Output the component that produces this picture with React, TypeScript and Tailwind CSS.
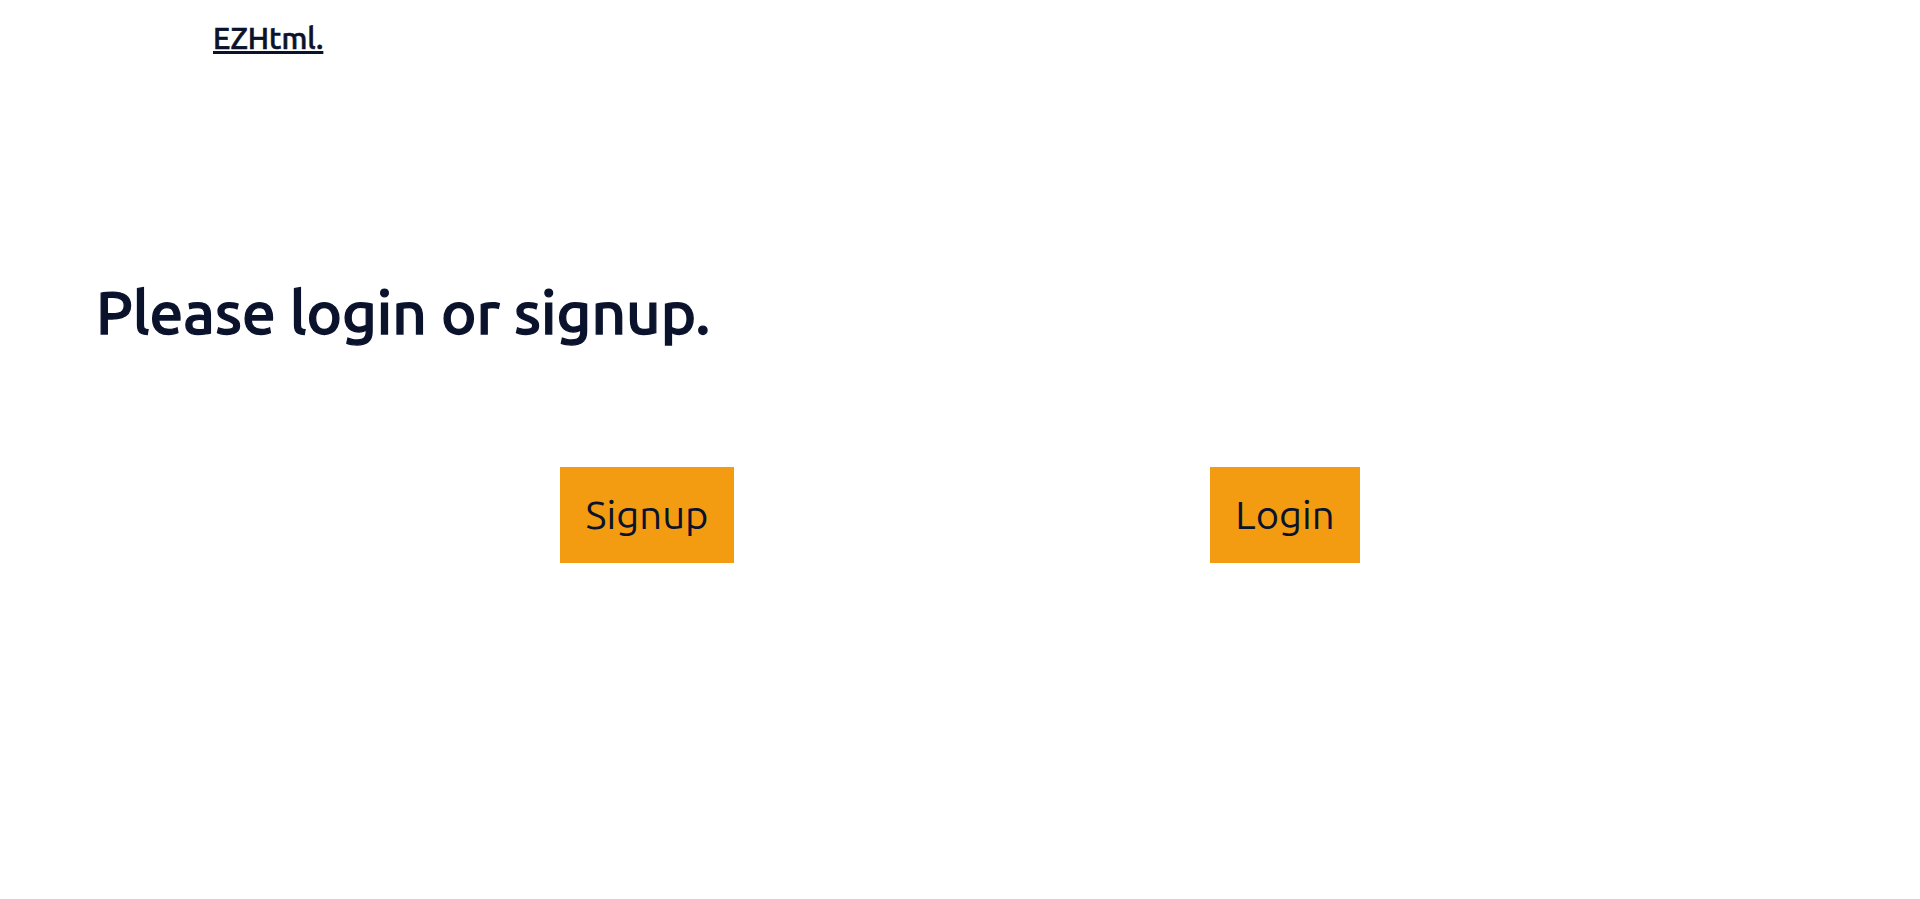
const actions = [
  { label: "Signup", href: "#signup", width: "min-w-[174px]" },
  { label: "Login", href: "#login", width: "min-w-[150px]" },
];

export default function App() {
  return (
    <div className="min-h-screen bg-white font-['Ubuntu','Noto_Sans',sans-serif] text-[#0a122c]">
      <header className="px-[213px] pt-4">
        <a href="#home" className="inline-block text-[30px] leading-[44px] font-medium underline decoration-[3px] underline-offset-2 [-webkit-text-stroke:thin]">
          EZHtml.
        </a>
      </header>
      <main className="pt-[202px]">
        <h1 className="px-24 text-[60px] leading-[100px] font-medium [-webkit-text-stroke:thin]">Please login or signup.</h1>
        <nav aria-label="Account" className="mt-[105px] flex justify-evenly px-[84px]">
          {actions.map((action) => (
            <a
              key={action.label}
              href={action.href}
              className={`${action.width} bg-[#f39c12] py-6 text-center text-[40px] leading-[48px]`}
            >
              {action.label}
            </a>
          ))}
        </nav>
      </main>
    </div>
  );
}
